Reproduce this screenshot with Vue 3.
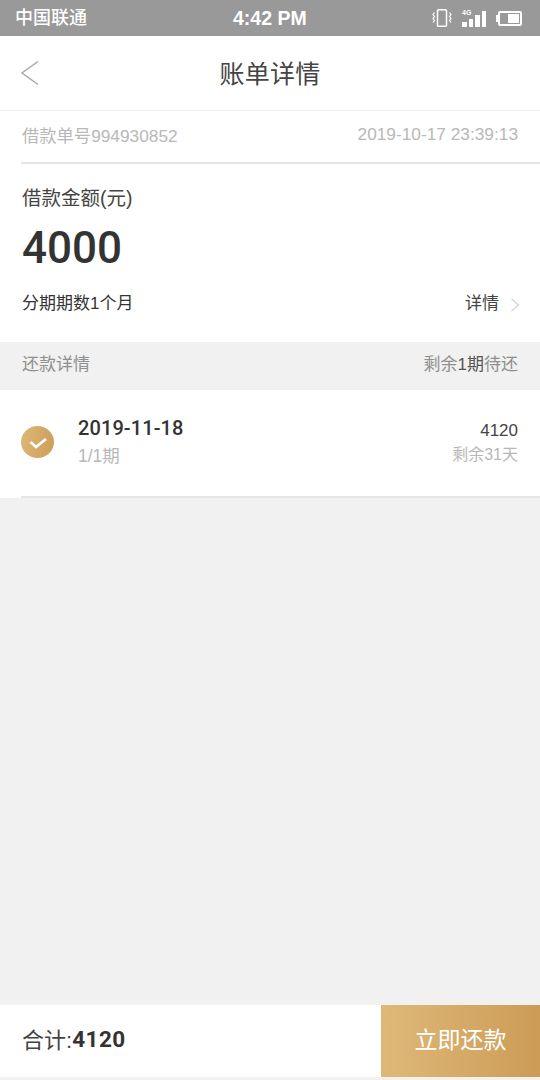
<script setup>
const summary = {
  orderNo: '994930852',
  time: '2019-10-17 23:39:13',
  amount: '4000',
  months: 1
}

const bills = [
  { date: '2019-11-18', period: '1/1期', money: '4120', left: '剩余31天' }
]
</script>

<template>
  <div class="page">
    <div class="status-bar">
      <span class="carrier">中国联通</span>
      <span class="clock">4:42 PM</span>
      <div class="status-icons">
        <svg width="20" height="18" viewBox="0 0 20 18" fill="none" stroke="#fff">
          <rect x="5.5" y="0.8" width="9" height="16.4" rx="1" stroke-width="1.5" />
          <path d="M2.5 3.5 1 5.5l1.5 2-1.500 2 1.500 2-1.500 2 M17.500 3.500l1.500 2-1.500 2 1.500 2-1.500 2 1.500 2" stroke-width="1.200" />
        </svg>
        <div class="signal">
          <span class="net">4G</span>
          <i class="b1"></i><i class="b2"></i><i class="b3"></i><i class="b4"></i>
        </div>
        <div class="battery"><i></i></div>
      </div>
    </div>

    <div class="nav">
      <svg class="back" width="20" height="26" viewBox="0 0 20 26" fill="none" stroke="#a9a9a9" stroke-width="1.500">
        <path d="M18 1.500 2 13l16 11.500" />
      </svg>
      <span class="nav-title">账单详情</span>
    </div>

    <div class="order-row">
      <span>借款单号{{ summary.orderNo }}</span>
      <span>{{ summary.time }}</span>
    </div>

    <div class="summary">
      <div class="summary-label">借款金额(元)</div>
      <div class="summary-amount">{{ summary.amount }}</div>
      <div class="summary-foot">
        <span>分期期数{{ summary.months }}个月</span>
        <span class="detail-link">
          详情
          <svg width="10" height="14" viewBox="0 0 10 14" fill="none" stroke="#d2d2d2" stroke-width="1.200">
            <path d="M1.500 1 8.500 7l-7 6" />
          </svg>
        </span>
      </div>
    </div>

    <div class="section-head">
      <span>还款详情</span>
      <span>剩余<b>1期</b>待还</span>
    </div>

    <div v-for="bill in bills" :key="bill.date" class="bill">
      <div class="bill-inner">
        <div class="check">
          <svg width="20" height="16" viewBox="0 0 20 16" fill="none" stroke="#fff" stroke-width="2.600">
            <path d="M2.500 8 8 13 18 5" />
          </svg>
        </div>
        <div class="bill-main">
          <div class="bill-date">{{ bill.date }}</div>
          <div class="bill-period">{{ bill.period }}</div>
        </div>
        <div class="bill-side">
          <div class="bill-money">{{ bill.money }}</div>
          <div class="bill-left">{{ bill.left }}</div>
        </div>
      </div>
    </div>

    <div class="footer">
      <div class="total">合计:<b>4120</b></div>
      <button class="pay">立即还款</button>
    </div>
  </div>
</template>

<style scoped>
.page {
  width: 540px;
  height: 1080px;
  display: flex;
  flex-direction: column;
  background: #f1f1f1;
  font-family: "Liberation Sans", "Noto Sans CJK SC", sans-serif;
  overflow: hidden;
}

.status-bar {
  height: 36px;
  flex: none;
  box-sizing: border-box;
  display: flex;
  align-items: center;
  position: relative;
  padding: 0 16px 0 15px;
  background: #999;
  color: #fff;
}

.carrier {
  font-size: 18px;
  font-weight: 500;
  line-height: 24px;
}

.clock {
  position: absolute;
  left: 233px;
  font-size: 19.5px;
  font-weight: 700;
}

.status-icons {
  margin-left: auto;
  margin-right: 2px;
  display: flex;
  align-items: center;
  gap: 10px;
}

.signal {
  position: relative;
  width: 25px;
  height: 18px;
  display: flex;
  align-items: flex-end;
  gap: 2px;
}

.signal i {
  width: 4.500px;
  background: #fff;
}

.signal .b1 { height: 5px; }
.signal .b2 { height: 8px; }
.signal .b3 { height: 12px; }
.signal .b4 { height: 16px; }

.net {
  position: absolute;
  left: 0;
  top: 0;
  font-size: 7px;
  font-weight: 700;
  line-height: 8px;
}

.battery {
  position: relative;
  width: 24px;
  height: 15px;
  margin-left: 1px;
  border: 2px solid #fff;
  border-radius: 2px;
  box-sizing: border-box;
  display: flex;
  justify-content: flex-end;
  padding: 1px;
}

.battery::before {
  content: "";
  position: absolute;
  left: -4px;
  top: 2px;
  width: 2px;
  height: 7px;
  background: #fff;
}

.battery i {
  width: 11px;
  background: #fff;
}

.nav {
  height: 74px;
  flex: none;
  box-sizing: border-box;
  padding-bottom: 2px;
  display: flex;
  align-items: center;
  justify-content: center;
  position: relative;
  background: #fff;
}

.back {
  position: absolute;
  left: 20px;
  top: 24px;
}

.nav-title {
  font-size: 25px;
  color: #444;
  letter-spacing: 0.2px;
}

.order-row {
  height: 53px;
  flex: none;
  box-sizing: border-box;
  margin-top: 1px;
  display: flex;
  align-items: center;
  justify-content: space-between;
  padding: 0 22px 6px;
  background: #fff;
  font-size: 17.300px;
  color: #b8b8b8;
  position: relative;
}

.order-row::after {
  content: "";
  position: absolute;
  left: 21px;
  right: 0;
  bottom: 0;
  height: 2px;
  background: #e6e6e6;
}

.summary {
  height: 178px;
  flex: none;
  box-sizing: border-box;
  padding: 21px 22px 0;
  background: #fff;
  color: #333;
}

.summary-label {
  font-size: 19.500px;
  line-height: 26px;
  color: #444;
}

.summary-amount {
  margin-top: 10px;
  font-family: Roboto, sans-serif;
  font-size: 44px;
  font-weight: 500;
  line-height: 54px;
}

.summary-foot {
  margin-top: 17px;
  display: flex;
  justify-content: space-between;
  align-items: center;
  font-size: 17px;
  line-height: 24px;
}

.detail-link {
  display: flex;
  align-items: center;
  gap: 11px;
  margin-right: -2px;
  font-size: 17px;
  color: #444;
}

.detail-link svg {
  margin-top: 2px;
}

.section-head {
  height: 48px;
  flex: none;
  box-sizing: border-box;
  display: flex;
  align-items: center;
  justify-content: space-between;
  padding: 0 22px 8px;
  font-size: 17px;
  color: #8f8f8f;
}

.section-head b {
  font-weight: 400;
  color: #555;
}

.bill {
  height: 108px;
  flex: none;
  background: #fff;
}

.bill-inner {
  height: 106px;
  margin-left: 21px;
  padding-right: 22px;
  display: flex;
  align-items: center;
  border-bottom: 2px solid #e6e6e6;
}

.check {
  width: 33px;
  height: 32px;
  margin-bottom: 3px;
  border-radius: 50%;
  display: flex;
  align-items: center;
  justify-content: center;
  background: linear-gradient(100deg, #deb877, #cc9d58);
}

.bill-main {
  margin-left: 24px;
  margin-bottom: 4px;
}

.bill-date {
  font-family: Roboto, sans-serif;
  font-size: 20px;
  font-weight: 500;
  line-height: 28px;
  color: #333;
  letter-spacing: 0.1px;
}

.bill-period {
  margin-top: 2px;
  font-size: 17.500px;
  line-height: 24px;
  color: #b8b8b8;
}

.bill-side {
  margin-left: auto;
  text-align: right;
}

.bill-money {
  font-size: 17px;
  line-height: 24px;
  color: #444;
}

.bill-left {
  font-size: 16px;
  line-height: 24px;
  color: #b8b8b8;
}

.footer {
  margin-top: auto;
  margin-bottom: 3px;
  height: 72px;
  flex: none;
  display: flex;
  align-items: stretch;
  background: #fff;
}

.total {
  flex: 1;
  display: flex;
  align-items: center;
  padding: 0 0 6px 22px;
  font-size: 22px;
  color: #444;
}

.total b {
  font-family: Roboto, sans-serif;
  font-size: 22.500px;
  font-weight: 700;
  color: #333;
  letter-spacing: 0.5px;
  margin-top: 1px;
}

.pay {
  width: 159px;
  border: 0;
  padding: 0 0 6px;
  background: linear-gradient(90deg, #dfb878, #cc9c56);
  color: #fff;
  font-family: inherit;
  font-size: 23px;
}
</style>
